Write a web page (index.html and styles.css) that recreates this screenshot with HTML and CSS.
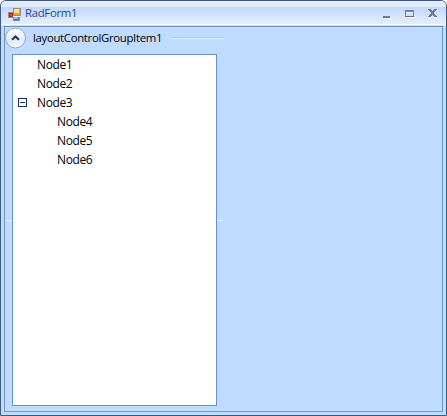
FILE: index.html
```html
<!DOCTYPE html>
<html lang="en">
<head>
<meta charset="utf-8">
<title>RadForm1</title>
<link rel="stylesheet" href="styles.css">
</head>
<body>
<div class="window">
  <header class="titlebar">
    <svg class="app-icon" width="14" height="13" viewBox="0 0 14 13" shape-rendering="crispEdges">
      <path fill="#8b8b95" d="M0 4h5v6H0zM5 0h8v8H5zM5 8h7v5H5z"/>
      <path fill="#fff" d="M5 8h7v1H5z"/>
      <path fill="#b51f16" d="M1 5h4v4H1z"/><path fill="#e0523b" d="M2 6h2v2H2z"/>
      <path fill="#e9a719" d="M6 1h6v6H6z"/><path fill="#ffe07c" d="M6 1h5v4H6z"/>
      <path fill="#3d74df" d="M6 9h5v3H6z"/><path fill="#8fb8ff" d="M6 9h4v2H6z"/>
    </svg>
    <h1 class="title">RadForm1</h1>
    <svg class="controls" width="54" height="11" viewBox="0 0 54 11" shape-rendering="crispEdges">
      <path fill="#fff" d="M1 9h7v1H1zM23 8h9v1h-9z"/>
      <path fill="#6d83a3" d="M0 7h7v1H0z"/><path fill="#6b6b70" d="M0 8h7v1H0z"/>
      <path fill="#6d83a3" d="M22 1h9v2h-9zM22 3h1v4h-1zM30 3h1v4h-1z"/>
      <path fill="#6b6b70" d="M22 7h9v1h-9z"/><path fill="#fff" d="M23 3h7v1h-7z"/>
      <g transform="translate(45 0)">
        <path fill="#fff" d="M0 1h3v1H0zM6 1h3v1H6zM0 8h3v1H0zM6 8h3v1H6z"/>
        <path fill="#6b7890" d="M0 0h3v1H0zM6 0h3v1H6zM1 1h3v1H1zM5 1h3v1H5zM2 2h5v1H2zM3 3h3v2H3zM2 5h5v1H2zM1 6h3v1H1zM5 6h3v1H5zM0 7h3v1H0zM6 7h3v1H6z"/>
      </g>
    </svg>
  </header>
  <main class="client">
    <section class="group">
      <div class="group-head">
        <svg class="toggle" width="22" height="22" viewBox="0 0 22 22">
          <defs><linearGradient id="g" x2="0" y2="1"><stop stop-color="#fff"/><stop offset=".45" stop-color="#edf3fc"/><stop offset=".55" stop-color="#dce8f9"/><stop offset="1" stop-color="#f7faff"/></linearGradient></defs>
          <circle cx="10.5" cy="11" r="10" fill="url(#g)" stroke="#91a9cc"/>
          <path d="M7.1 12.7 10.5 9.3l3.4 3.4" fill="none" stroke="#15315f" stroke-width="2"/>
        </svg>
        <span class="group-title">layoutControlGroupItem1</span>
        <span class="rule"></span>
      </div>
      <ul class="tree">
        <li><span class="label">Node1</span></li>
        <li><span class="label">Node2</span></li>
        <li><span class="expander"></span><span class="label">Node3</span></li>
        <li class="child"><span class="label">Node4</span></li>
        <li class="child"><span class="label">Node5</span></li>
        <li class="child"><span class="label">Node6</span></li>
      </ul>
      <span class="tick tick-left"></span>
      <span class="tick tick-right"></span>
    </section>
  </main>
</div>
</body>
</html>
```
FILE: styles.css
```css
* { box-sizing: border-box; }
body { margin: 0; background: #fff; font: 12px/19px "Open Sans", "Noto Sans", sans-serif; color: #000; }
.window {
  width: 447px; height: 416px; display: flex; flex-direction: column;
  padding: 0 3px 3px; border: 1px solid #3b5a82; border-radius: 6px 6px 0 0;
  background: #bfdbff;
}
.titlebar {
  height: 24px; flex: none; margin: 0 -3px 1px; padding: 0 9px 0 7px;
  display: flex; align-items: flex-start; border-radius: 5px 5px 0 0;
  border-bottom: 1px solid #fff;
  background: linear-gradient(#e5eefc 0 1px, #e3ebf9 1px 6px, #c3d8fc 6px, #e3effd 100%);
}
.app-icon { margin: 7px 1px 0 0; }
.title {
  margin: 2px auto 0 2px; font-size: 11.4px; font-weight: 400; line-height: 20px;
  color: #1f48a1; letter-spacing: -.32px;
}
.controls { margin-top: 8px; }
.client { flex: 1; border: 1px solid #7393bf; }
.group { position: relative; width: 218px; height: 100%; }
.group-head { height: 22px; display: flex; align-items: center; }
.toggle { flex: none; }
.group-title { width: 129px; margin-left: 6px; font-size: 11.4px; line-height: 20px; white-space: nowrap; letter-spacing: -.33px; }
.rule { flex: 1; height: 2px; margin-left: 9px; border-top: 1px solid #acc8ef; border-bottom: 1px solid #e5efff; }
.tree {
  width: 205px; height: 352px; margin: 5px 0 0 7px; padding: 1px 0;
  list-style: none; background: #fff; border: 1px solid #6593cf;
}
.tree li { display: flex; align-items: center; height: 19px; padding-left: 24px; }
.tree .child { padding-left: 44px; }
.label { margin-top: -2px; letter-spacing: -.4px; }
.expander {
  width: 9px; height: 9px; margin: -2px 10px 0 -19px; border: 1px solid #15315f;
  background: linear-gradient(#15315f, #15315f) center / 5px 1px no-repeat;
}
.tick { position: absolute; top: 193px; height: 1px; background: #f4f0ee; }
.tick-left { left: 1px; width: 6px; }
.tick-right { right: 0; width: 6px; }
```
